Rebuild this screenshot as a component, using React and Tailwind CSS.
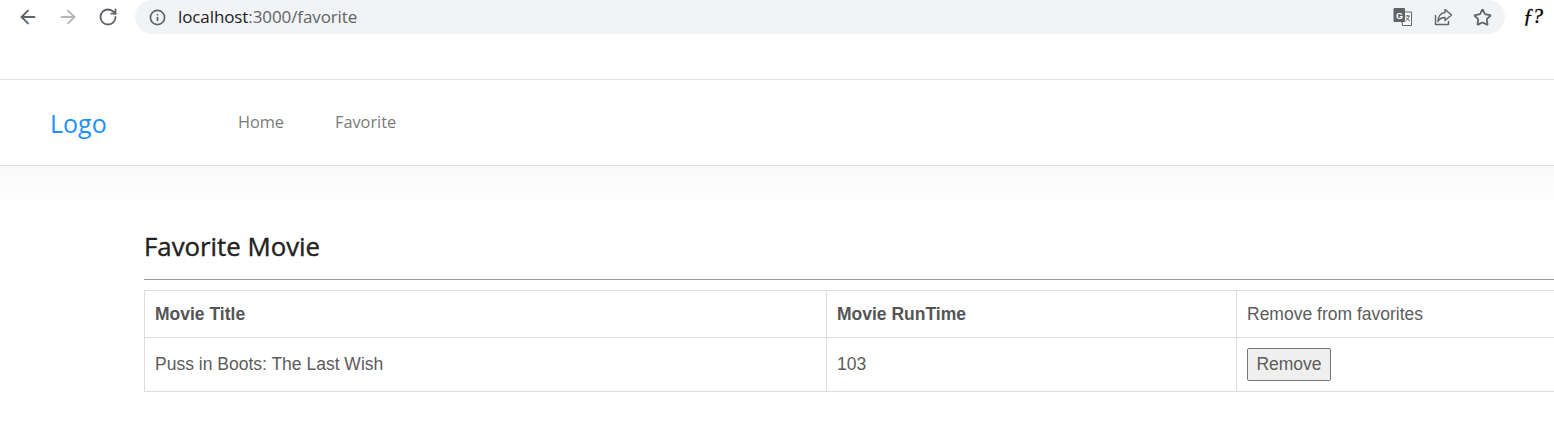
import React from 'react';
import { ArrowLeft, ArrowRight, RotateCw, Info, Star } from 'lucide-react';

const serif = '[font-family:"Liberation_Serif",serif]';

function TranslateIcon() {
  return (
    <svg width="20" height="20" viewBox="0 0 20 20" fill="none">
      <path d="M8 5h10.5v13.5H9.500z" fill="#fff" stroke="#5f6368" strokeWidth="1" />
      <rect x="0.500" y="1" width="11.500" height="14" rx="1" fill="#5f6368" />
      <text x="6.500" y="11.500" textAnchor="middle" fontSize="9" fontWeight="700" fill="#fff" fontFamily="Liberation Sans, sans-serif">G</text>
      <path d="M12.500 9h4.500M14.700 8v1M16 9c-.5 2.500-2 4-3.500 5M13.500 10.500c.7 1.500 2 2.800 3.500 3.500" stroke="#5f6368" strokeWidth="1" />
    </svg>
  );
}

function ShareIcon() {
  return (
    <svg width="20" height="20" viewBox="0 0 20 20" fill="none" stroke="#5f6368" strokeWidth="1.4" strokeLinejoin="round">
      <path d="M2.500 8v9.500h13V14" />
      <path d="M12 2.500l6.500 5.500-6.500 5.500V10.500C9 10.500 6.500 11.500 5 14.500 5 10 7.500 6 12 5.500z" />
    </svg>
  );
}

function BrowserBar() {
  return (
    <div className="flex h-[79px] items-start bg-white">
      <div className="flex h-[34px] w-[135px] shrink-0 items-center">
        <ArrowLeft size={22} strokeWidth={2} className="ml-[17px] text-[#5f6368]" />
        <ArrowRight size={22} strokeWidth={2} className="ml-[18px] text-[#b4b6b9]" />
        <RotateCw size={20} strokeWidth={2.2} className="ml-[19px] text-[#5f6368]" />
      </div>
      <div className="flex h-[34px] w-[1370px] shrink-0 items-center rounded-full bg-[#f1f3f4] pl-[14px] pr-[13px]">
        <Info size={17} strokeWidth={2.4} className="text-[#5f6368]" />
        <span className="ml-[12px] font-['Open_Sans',sans-serif] text-[17px] tracking-[-0.1px] text-[#5f6368]">
          <span className="text-[#202124]">localhost</span>:3000/favorite
        </span>
        <div className="ml-auto flex items-center gap-[20px]">
          <TranslateIcon />
          <ShareIcon />
          <Star size={19} strokeWidth={2.2} className="text-[#5f6368]" />
        </div>
      </div>
      <div className={`flex h-[34px] flex-1 items-center pl-[18px] text-[21px] italic tracking-[-1px] text-black [-webkit-text-stroke:0.3px] ${serif}`}>
        ƒ?
      </div>
    </div>
  );
}

function Navbar() {
  return (
    <div className="flex h-[87px] items-center border-y border-[#e1e1e1] bg-white pl-[50px] font-['Open_Sans',sans-serif]">
      <div className="mt-[2px] w-[188px] text-[25px] leading-none text-[#1e90ff]">Logo</div>
      <div className="flex gap-[51px] text-[16.300px] text-[#7a7a7a]">
        <span>Home</span>
        <span>Favorite</span>
      </div>
    </div>
  );
}

export default function App() {
  const cell = 'border border-[#ddd] px-[10px] align-middle';

  return (
    <div className="h-[447px] w-[1554px] overflow-hidden bg-white">
      <BrowserBar />
      <Navbar />
      <div className="h-[36px] bg-gradient-to-b from-[#f8f8f8] to-white" />
      <div className="pl-[144px]">
        <h2 className="flex h-[78px] w-[1500px] items-center border-b border-[#999] pt-[12px] font-['Open_Sans',sans-serif] text-[25.800px] font-normal text-[#222] [-webkit-text-stroke:0.4px]">
          Favorite Movie
        </h2>
        <table className="mt-[10px] w-[1500px] table-fixed border-collapse font-['Liberation_Sans',sans-serif] text-[17.500px] text-[#5c5c5c]">
          <tbody>
            <tr className="h-[47px]">
              <th className={`${cell} w-[682px] text-left font-bold text-[#555]`}>Movie Title</th>
              <th className={`${cell} w-[410px] text-left font-bold text-[#555]`}>Movie RunTime</th>
              <td className={cell}>Remove from favorites</td>
            </tr>
            <tr className="h-[54px]">
              <td className={cell}>Puss in Boots: The Last Wish</td>
              <td className={cell}>103</td>
              <td className={cell}>
                <button className="block h-[33px] w-[84px] rounded-[2px] border border-[#767676] bg-[#efefef] text-[17.500px] text-[#5c5c5c]">
                  Remove
                </button>
              </td>
            </tr>
          </tbody>
        </table>
      </div>
    </div>
  );
}
